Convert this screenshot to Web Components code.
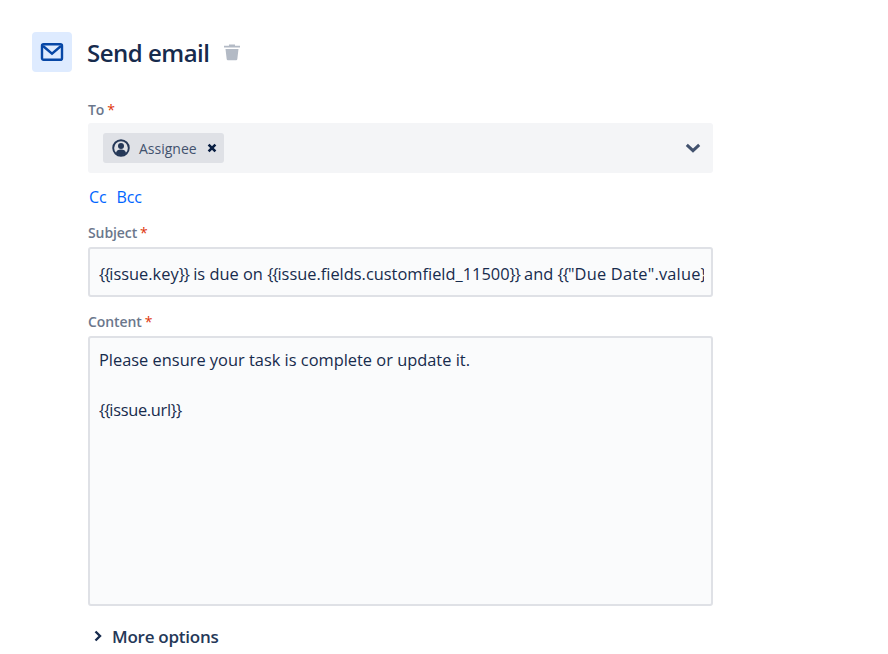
<!DOCTYPE html>
<html><head><meta charset="utf-8">
<style>
html,body{margin:0;padding:0;background:#fff;height:654px;overflow:hidden}
body{font-family:"Open Sans","Noto Sans",sans-serif;color:#172b4d}
</style></head><body>
<email-form></email-form>
<script>
class FieldLabel extends HTMLElement{constructor(){super();this.attachShadow({mode:'open'}).innerHTML=`<style>
:host{display:block;height:20px;line-height:20px;font-size:14px;font-weight:600;color:#6b778c;letter-spacing:-.1px;position:relative;top:1px}
i{font-style:normal;font-weight:400;color:#de350b;margin-left:3px}
</style><slot></slot><i>*</i>`}}
customElements.define('field-label',FieldLabel);

class UserTag extends HTMLElement{constructor(){super();this.attachShadow({mode:'open'}).innerHTML=`<style>
:host{display:inline-flex;align-items:center;height:30px;width:121px;box-sizing:border-box;padding-left:9px;background:#dfe1e6;border-radius:3px;font-size:14px;color:#42526e}
svg{display:block;flex:none}
span{margin-left:9px;flex:1}
.x{margin-right:7px}
</style><svg width="18" height="18" viewBox="0 0 18 18"><circle cx="9" cy="9" r="7.8" fill="none" stroke="#253858" stroke-width="1.9"/><circle cx="9" cy="7" r="3" fill="#253858"/><path d="M3.900 14.200C4.400 11.600 6.300 10.600 9 10.600s4.600 1 5.100 3.600A7.400 7.400 0 0 1 9 16.200a7.400 7.400 0 0 1-5.100-2z" fill="#253858"/></svg><span><slot></slot></span><svg class="x" width="10" height="10" viewBox="0 0 10 10"><path d="M1.600 1.600l6.800 6.800M8.400 1.600L1.600 8.400" stroke="#091e42" stroke-width="2.600"/></svg>`}}
customElements.define('user-tag',UserTag);

class SelectBox extends HTMLElement{constructor(){super();this.attachShadow({mode:'open'}).innerHTML=`<style>
:host{display:flex;align-items:center;justify-content:space-between;height:50px;box-sizing:border-box;padding:0 12px 0 15px;background:#f4f5f7;border-radius:3px}
svg{display:block}
</style><slot></slot><svg width="16" height="10" viewBox="0 0 16 10"><path d="M1.800 1.800L8 7.600l6.200-5.800" fill="none" stroke="#42526e" stroke-width="3"/></svg>`}}
customElements.define('select-box',SelectBox);

class TextBox extends HTMLElement{constructor(){super();this.attachShadow({mode:'open'}).innerHTML=`<style>
:host{display:block;box-sizing:border-box;background:#fafbfc;border:2px solid #dfe1e6;border-radius:3px;padding:0 7px 0 9px;font-size:16.4px;line-height:25px;color:#172b4d}
div{overflow:hidden;white-space:pre;height:100%}
</style><div><slot></slot></div>`}}
customElements.define('text-box',TextBox);

class EmailForm extends HTMLElement{constructor(){super();this.attachShadow({mode:'open'}).innerHTML=`<style>
:host{display:block;padding:32px 0 0 32px}
header{display:flex;align-items:center;height:40px}
.ic{width:40px;height:40px;border-radius:4px;background:#deebff;display:flex;align-items:center;justify-content:center}
svg{display:block}
h1{margin:1px 0 0 15px;font-size:24px;font-weight:600;line-height:40px;color:#172b4d;letter-spacing:-.5px}
.trash{margin-left:15px}
main{margin:27px 0 0 56px;width:625px}
.links{display:flex;gap:10px;height:20px;line-height:20px;margin:14px 0 0 1px;font-size:16px;color:#0065ff;letter-spacing:-.1px}
.s{margin-top:15px;margin-bottom:5px}
.c{margin-top:14px;margin-bottom:5px}
#subj{height:50px;padding-top:12px}
#cont{height:270px;padding-top:9px}
.more{display:flex;align-items:center;margin-top:18px;margin-left:5px;height:24px;font-size:17px;font-weight:600;color:#253858;letter-spacing:-.25px}
.more svg{margin-right:9px}
field-label.t{margin-bottom:4px}
b{font-weight:400;letter-spacing:-1px}
.wide{letter-spacing:.2px}
.tight{letter-spacing:-.3px}
</style>
<header><div class="ic"><svg width="24" height="20" viewBox="0 0 24 20"><rect x="2" y="2.200" width="20" height="15.600" rx="1.600" fill="none" stroke="#0747a6" stroke-width="2.400"/><path d="M3 4l9 7.600L21 4" fill="none" stroke="#0747a6" stroke-width="2.400"/></svg></div>
<h1>Send email</h1>
<svg class="trash" width="16" height="18" viewBox="0 0 16 18"><path d="M0 2.800h5V1.500h6v1.300h5v1.800H0z" fill="#b3bac5"/><path d="M1.500 6h13l-1.200 10.200a1.200 1.200 0 0 1-1.200 1H3.900a1.200 1.200 0 0 1-1.200-1z" fill="#b3bac5"/></svg></header>
<main>
<field-label class="t">To</field-label>
<select-box><user-tag>Assignee</user-tag></select-box>
<div class="links"><span>Cc</span><span>Bcc</span></div>
<field-label class="s">Subject</field-label>
<text-box id="subj"><b>{{</b>issue.key<b>}}</b> is due on <b>{{</b>issue.fields.customfield_11500<b>}}</b> and <b>{{</b><span class="wide">"Due Date".value</span><b>}}</b></text-box>
<field-label class="c">Content</field-label>
<text-box id="cont">Please ensure your task is complete or update it.

<b>{{</b><span class="tight">issue.url</span><b>}}</b></text-box>
<div class="more"><svg width="10" height="12" viewBox="0 0 10 12"><path d="M2.500 1.500L7 6l-4.500 4.500" fill="none" stroke="#172b4d" stroke-width="2.400"/></svg>More options</div>
</main>`}}
customElements.define('email-form',EmailForm);
</script>
</body></html>
